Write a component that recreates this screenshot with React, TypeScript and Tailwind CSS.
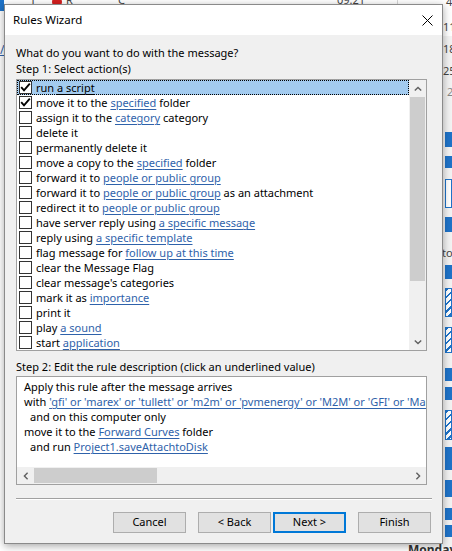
import React from "react";

type Seg = string | { l: string };
type Row = { segs: Seg[]; checked?: boolean; selected?: boolean };

const rows: Row[] = [
  { segs: ["run ", { l: "a script" }], checked: true, selected: true },
  { segs: ["move it to the ", { l: "specified" }, " folder"], checked: true },
  { segs: ["assign it to the ", { l: "category" }, " category"] },
  { segs: ["delete it"] },
  { segs: ["permanently delete it"] },
  { segs: ["move a copy to the ", { l: "specified" }, " folder"] },
  { segs: ["forward it to ", { l: "people or public group" }] },
  { segs: ["forward it to ", { l: "people or public group" }, " as an attachment"] },
  { segs: ["redirect it to ", { l: "people or public group" }] },
  { segs: ["have server reply using ", { l: "a specific message" }] },
  { segs: ["reply using ", { l: "a specific template" }] },
  { segs: ["flag message for ", { l: "follow up at this time" }] },
  { segs: ["clear the Message Flag"] },
  { segs: ["clear message's categories"] },
  { segs: ["mark it as ", { l: "importance" }] },
  { segs: ["print it"] },
  { segs: ["play ", { l: "a sound" }] },
  { segs: ["start ", { l: "application" }] },
];

function Check({ on }: { on?: boolean }) {
  return (
    <svg width="13" height="13" viewBox="0 0 13 13" className="shrink-0">
      <rect x="0.5" y="0.5" width="12" height="12" fill="#fff" stroke="#333" />
      {on && <path d="M2.2 6.2 L5 9.3 L10.8 2.6" fill="none" stroke="#000" strokeWidth="1.9" />}
    </svg>
  );
}

function Chevron({ dir }: { dir: "up" | "down" | "left" | "right" }) {
  const d =
    dir === "up"
      ? "M0.8 4.6 L4 1.4 L7.2 4.6"
      : dir === "down"
      ? "M0.8 1.4 L4 4.6 L7.2 1.4"
      : dir === "left"
      ? "M4.6 0.8 L1.4 4 L4.6 7.2"
      : "M1.4 0.8 L4.6 4 L1.4 7.2";
  const vert = dir === "up" || dir === "down";
  return (
    <svg
      width={vert ? 8 : 6}
      height={vert ? 6 : 8}
      viewBox={vert ? "0 0 8 6" : "0 0 6 8"}
    >
      <path d={d} fill="none" stroke="#606060" strokeWidth="1.4" />
    </svg>
  );
}

const LINK = "text-[#2f62aa] underline underline-offset-2 decoration-1";

function Btn({ label, focus }: { label: string; focus?: boolean }) {
  return (
    <div
      className={
        "flex h-[21px] w-[73px] items-center justify-center bg-[#e1e1e1] text-black " +
        (focus ? "border-2 border-[#0078d7]" : "border border-[#adadad]")
      }
    >
      {label}
    </div>
  );
}

export default function App() {
  return (
    <div className="relative h-[551px] w-[452px] overflow-hidden bg-white font-['Noto_Sans',sans-serif] text-[11px] text-black">
      {/* Background (Outlook window behind the dialog) */}
      <div className="absolute left-0 top-0 h-[11px] w-[4px] bg-[#1f73c8]" />
      <div className="absolute left-0 top-[43px] text-[12px] leading-[14px] text-[#2f62aa] underline">/</div>
      <div className="absolute left-[30px] top-[-7px] text-[11px] leading-[14px] text-[#444]">T</div>
      <div className="absolute left-[52px] top-[-3px] h-[10px] w-[10px] rounded-full bg-[#d42020]" />
      <div className="absolute left-[66px] top-[-7px] text-[11px] leading-[14px] text-[#444]">R</div>
      <div className="absolute left-[118px] top-[-7px] text-[11px] leading-[14px] text-[#444]">C</div>
      <div className="absolute left-[337px] top-[-7px] text-[11px] leading-[14px] text-[#444]">09:21</div>
      <div className="absolute left-[397px] top-0 h-[5px] w-px bg-[#d6d6d6]" />
      <div className="absolute left-[443px] top-[36px] h-[515px] w-[9px] bg-[#f3f3f3]" />
      <div className="absolute left-[446px] top-[-5px] text-[11px] leading-[14px] text-[#444]">4</div>
      <div className="absolute left-[443px] top-[20px] text-[11px] leading-[14px] text-[#444]">11</div>
      <div className="absolute left-[443px] top-[42px] text-[11px] leading-[14px] text-[#444]">18</div>
      <div className="absolute left-[443px] top-[64px] text-[11px] leading-[14px] text-[#444]">25</div>
      <div className="absolute left-[447px] top-[85px] text-[11px] leading-[14px] text-[#888]">2</div>
      <div className="absolute left-[445px] top-[132px] h-[15px] w-[7px] bg-[#1f73c8]" />
      <div className="absolute left-[445px] top-[156px] h-[12px] w-[7px] bg-[#1f73c8]" />
      <div className="absolute left-[445px] top-[179px] h-[29px] w-[7px] border border-[#1f73c8] bg-white" />
      <div className="absolute left-[445px] top-[217px] h-[15px] w-[7px] bg-[#1f73c8]" />
      <div className="absolute left-[442px] top-[246px] text-[11px] leading-[14px] text-[#444]">to</div>
      <div className="absolute left-[445px] top-[265px] h-[14px] w-[7px] bg-[#1f73c8]" />
      <div className="absolute left-[445px] top-[288px] h-[29px] w-[7px] border border-[#1f73c8] bg-[repeating-linear-gradient(135deg,#1f73c8_0_2px,#fff_2px_5px)]" />
      <div className="absolute left-[445px] top-[327px] h-[26px] w-[7px] border border-[#1f73c8] bg-[repeating-linear-gradient(135deg,#1f73c8_0_2px,#fff_2px_5px)]" />
      <div className="absolute left-[445px] top-[368px] h-[13px] w-[7px] bg-[#1f73c8]" />
      <div className="absolute left-[445px] top-[387px] h-[13px] w-[7px] bg-[#1f73c8]" />
      <div className="absolute left-[445px] top-[410px] h-[30px] w-[7px] border border-[#1f73c8] bg-[repeating-linear-gradient(135deg,#1f73c8_0_2px,#fff_2px_5px)]" />
      <div className="absolute left-[445px] top-[447px] h-[23px] w-[7px] bg-[#1f73c8]" />
      <div className="absolute left-[445px] top-[480px] h-[17px] w-[7px] bg-[#1f73c8]" />
      <div className="absolute left-[445px] top-[508px] h-[12px] w-[7px] bg-[#1f73c8]" />
      <div className="absolute left-[445px] top-[525px] h-[12px] w-[7px] bg-[#1f73c8]" />
      <div className="absolute left-[408px] top-[543px] text-[12px] font-bold leading-[14px] text-[#333]">Monday</div>

      {/* Dialog window */}
      <div className="absolute left-[4px] top-[4px] flex h-[540px] w-[439px] flex-col border border-[#8a8a8a] bg-[#f0f0f0] shadow-[0_2px_8px_rgba(0,0,0,0.35)]">
        {/* Title bar */}
        <div className="flex h-[30px] shrink-0 items-center justify-between bg-white pl-[8px] pr-[9px]">
          <span className="text-[11.5px] leading-[16px]">Rules Wizard</span>
          <svg width="11" height="11" viewBox="0 0 11 11">
            <path d="M0.5 0.5 L10.5 10.5 M10.5 0.5 L0.5 10.5" stroke="#000" strokeWidth="1" />
          </svg>
        </div>

        {/* Body */}
        <div className="flex flex-1 flex-col pl-[11px] pr-[10px] pt-[10px]">
          <div className="h-[16px] leading-[16px]">What do you want to do with the message?</div>
          <div className="h-[16px] leading-[16px]">Step 1: Select action(s)</div>

          {/* Actions list */}
          <div className="mt-[2px] flex h-[272px] w-[411px] border border-[#a0a0a0] bg-white">
            <div className="flex w-[392px] flex-col">
              {rows.map((r, i) => (
                <div
                  key={i}
                  className={
                    "relative flex h-[15px] items-center gap-[4px] whitespace-nowrap pl-[2px] leading-[15px] " +
                    (r.selected ? "bg-[#a3cbef]" : "")
                  }
                >
                  {r.selected && (
                    <span className="pointer-events-none absolute inset-0 border border-dotted border-black" />
                  )}
                  <Check on={r.checked} />
                  <span>
                    {r.segs.map((s, j) =>
                      typeof s === "string" ? (
                        <span key={j}>{s}</span>
                      ) : (
                        <span
                          key={j}
                          className={
                            r.selected
                              ? "text-black underline underline-offset-2 decoration-1"
                              : LINK
                          }
                        >
                          {s.l}
                        </span>
                      )
                    )}
                  </span>
                </div>
              ))}
            </div>
            {/* Vertical scrollbar */}
            <div className="flex w-[17px] flex-col bg-[#f0f0f0]">
              <div className="flex h-[17px] items-center justify-center">
                <Chevron dir="up" />
              </div>
              <div className="mx-[1px] h-[184px] bg-[#cdcdcd]" />
              <div className="flex-1" />
              <div className="flex h-[17px] items-center justify-center">
                <Chevron dir="down" />
              </div>
            </div>
          </div>

          <div className="mt-[8px] h-[16px] leading-[16px]">
            Step 2: Edit the rule description (click an underlined value)
          </div>

          {/* Description box */}
          <div className="mt-px flex h-[109px] w-[411px] flex-col border border-[#a0a0a0] bg-white">
            <div className="flex-1 overflow-hidden whitespace-nowrap pl-[7px] pt-[2px] leading-[15px]">
              <div>Apply this rule after the message arrives</div>
              <div>
                with{" "}
                <span className={LINK}>
                  'gfi' or 'marex' or 'tullett' or 'm2m' or 'pvmenergy' or 'M2M' or 'GFI' or 'Marex' or 'Tullett' or 'PVM'
                </span>
              </div>
              <div className="pl-[6px]">and on this computer only</div>
              <div>
                move it to the <span className={LINK}>Forward Curves</span> folder
              </div>
              <div className="pl-[6px]">
                and run <span className={LINK}>Project1.saveAttachtoDisk</span>
              </div>
            </div>
            {/* Horizontal scrollbar */}
            <div className="flex h-[17px] bg-[#f0f0f0]">
              <div className="flex w-[17px] items-center justify-center">
                <Chevron dir="left" />
              </div>
              <div className="my-[1px] w-[123px] bg-[#cdcdcd]" />
              <div className="flex-1" />
              <div className="flex w-[17px] items-center justify-center">
                <Chevron dir="right" />
              </div>
            </div>
          </div>

          {/* Separator */}
          <div className="mt-[13px] h-[2px] border-t border-b border-t-[#a0a0a0] border-b-white" />

          {/* Buttons */}
          <div className="mr-px mt-[12px] flex justify-end">
            <Btn label="Cancel" />
            <div className="w-[12px]" />
            <Btn label="< Back" />
            <div className="w-[2px]" />
            <Btn label="Next >" focus />
            <div className="w-[12px]" />
            <Btn label="Finish" />
          </div>
        </div>
      </div>
    </div>
  );
}
